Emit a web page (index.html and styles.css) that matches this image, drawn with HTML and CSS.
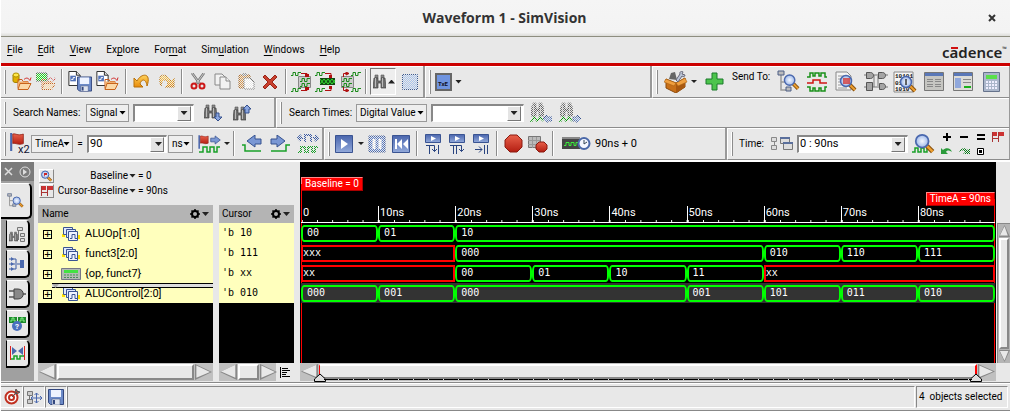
FILE: index.html
```html
<!DOCTYPE html>
<html lang="en">
<head>
<meta charset="utf-8">
<title>Waveform 1 - SimVision</title>
<link rel="stylesheet" href="styles.css">
</head>
<body>
<svg class="defs" width="0" height="0" aria-hidden="true">
  <defs>
    <linearGradient id="gBlue" x1="0" y1="0" x2="0" y2="1"><stop offset="0" stop-color="#4a66ae"/><stop offset="1" stop-color="#92a9da"/></linearGradient>
    <linearGradient id="gGold" x1="0" y1="0" x2="0" y2="1"><stop offset="0" stop-color="#ffd35c"/><stop offset="1" stop-color="#e88a08"/></linearGradient>
    <linearGradient id="gRed" x1="0" y1="0" x2="0" y2="1"><stop offset="0" stop-color="#e8604a"/><stop offset="1" stop-color="#b41e12"/></linearGradient>
    <radialGradient id="gGlass"><stop offset="0" stop-color="#f4f8ff"/><stop offset="1" stop-color="#9fb9ea"/></radialGradient>
  </defs>
  <symbol id="folder" viewBox="0 0 15 13"><path d="M1 11V2h4l1 2h5v2" fill="none" stroke="#c85a20"/><path d="M1 4h10v7H1z" fill="#f0b070"/><path d="M3 6h11l-3 6H1z" fill="#fbd9a8" stroke="#c8641c"/><path d="M7 2c2-2 4-2 6 1l1-3" fill="none" stroke="#d02828"/></symbol>
  <symbol id="page" viewBox="0 0 13 16"><path d="M.5.5h8l4 4v11H.5z" fill="#fff" stroke="#222"/><path d="M8.500 .5v4h4" fill="#ddd" stroke="#222"/><path d="M2 5h6v6H2z" fill="#5272b8"/><path d="M3 9h2V7h2" fill="none" stroke="#fff"/></symbol>
  <symbol id="disk" viewBox="0 0 16 16"><path d="M.5.5h15v15h-13l-2-2z" fill="#6c8ac8" stroke="#33477e"/><path d="M3 1h10v7H3z" fill="#eef3ff"/><path d="M4 10h8v6H4z" fill="#dfe4ee" stroke="#4a5a88" stroke-width=".6"/><path d="M5 11h2v4H5z" fill="#33477e"/></symbol>
  <symbol id="bino" viewBox="0 0 13 15"><path d="M2 1h3v3H2zM8 1h3v3H8z" fill="#888" stroke="#555" stroke-width=".6"/><path d="M1 4h4v3h3V4h4l1 10H8V9H5v5H0z" fill="#6e6e6e" stroke="#444" stroke-width=".7"/><path d="M2.500 4v9M9.500 4v9" stroke="#bbb"/></symbol>
  <symbol id="arrowR" viewBox="0 0 15 13"><path d="M1 4h6V1l7 5.500-7 5.500V9H1z" fill="#7a97d4" stroke="#34508e"/></symbol>
  <symbol id="mag" viewBox="0 0 18 18"><path d="M11 11l5 5" stroke="#8a5210" stroke-width="4"/><path d="M11 11l5 5" stroke="#eda030" stroke-width="2"/><circle cx="7" cy="7" r="5.500" fill="url(#gGlass)" stroke="#4a68ae" stroke-width="1.500"/></symbol>
  <symbol id="sigs" viewBox="0 0 18 14"><path d="M0 7h3v3H0zM14 8h4v4h-4zM1 1h3v3H1z" fill="#ffe000"/><g stroke="#3a5492"><path d="M1.500 .5h9v7h-9z" fill="#dfe8ff"/><path d="M4.500 2.500h9v8h-9z" fill="#dfe8ff"/><path d="M6.500 4.500h9v9h-9z" fill="#eef3ff"/><path d="M8 11.500h2v-4h3v4h2" fill="none"/></g></symbol>
  <symbol id="wav" viewBox="0 0 10 4"><path d="M0 3.500h2v-3h2.500v3H7v-3h3" fill="none" stroke="#1a8a1a"/></symbol>
  <symbol id="tree" viewBox="0 0 22 22"><path d="M4 5v15h6M4 12h5" fill="none" stroke="#999" stroke-width="1.500"/><path d="M1 1h6v4H1zM9 17h5v4H9z" fill="#bbb" stroke="#4c5f86"/></symbol>
  <symbol id="flag" viewBox="0 0 14 17"><path d="M1.500 0v17" stroke="#4a68ae" stroke-width="2"/><path d="M3 1c3-1 4 2 10 0v9c-5 2-7-1-10 0z" fill="url(#gRed)" stroke="#8a1a10" stroke-width=".7"/></symbol>
  <symbol id="flags" viewBox="0 0 12 10"><path d="M.5 0v10M6.500 0v10M0 6.500h7" stroke="#a33" fill="none"/><path d="M1 0h4v4H1zM7 0h5v4H7z" fill="#c33"/></symbol>
  <symbol id="calc" viewBox="0 0 20 12"><path d="M.5.5h19v11H.5z" fill="#b4bcb4" stroke="#778"/><path d="M3 2h14v3H3z" fill="#42e242"/><path d="M3 7h14M3 9.500h14" stroke="#4a8a5a" stroke-dasharray="2 1"/></symbol>
</svg>

<header class="titlebar"><h1>Waveform 1 - SimVision</h1><button class="close" aria-label="Close"><svg width="8" height="8"><path d="M1 1l6 6M7 1l-6 6" stroke="#333" stroke-width="2"/></svg></button></header>

<nav class="menubar">
  <button><u>F</u>ile</button><button><u>E</u>dit</button><button><u>V</u>iew</button><button>Ex<u>p</u>lore</button><button>For<u>m</u>at</button><button>Sim<u>u</u>lation</button><button><u>W</u>indows</button><button><u>H</u>elp</button>
  <span class="logo">c<span class="bar">a</span>dence<small>™</small></span>
</nav>

<div class="row tall">
  <div class="group file-tools">
    <i class="grip"></i>
    <button class="tool" aria-label="Open database"><svg width="20" height="20"><path d="M1 3v6c0 2 6 2 6 0V3" fill="#e0b000" stroke="#a08000"/><ellipse cx="4" cy="3" rx="3" ry="2" fill="#ffe84a" stroke="#b09000"/><use href="#folder" x="5" y="5" width="15" height="14"/></svg></button>
    <button class="tool off" aria-label="Close database"><svg width="20" height="20"><path d="M0 1h11v8H0z" fill="#1ee01e" stroke="#555"/><use href="#folder" x="5" y="5" width="15" height="14"/></svg></button>
    <i class="sep"></i>
    <button class="tool wide" aria-label="Save layout"><svg width="24" height="21"><use href="#page" width="13" height="15"/><use href="#disk" x="9" y="5" width="15" height="16"/></svg></button>
    <button class="tool wide" aria-label="Load layout"><svg width="24" height="21"><use href="#page" width="13" height="15"/><use href="#folder" x="8" y="6" width="15" height="14"/></svg></button>
    <i class="sep"></i>
    <button class="tool" aria-label="Undo"><svg width="18" height="16"><path d="M1 4v9h9L7 10c1-5 6-6 7 2 5-14-6-13-10-5z" fill="url(#gGold)" stroke="#b87008"/></svg></button>
    <button class="tool off" aria-label="Redo"><svg width="18" height="16"><path d="M17 4v9H8l3-3C10 5 5 4 4 12-1-2 10-1 14 7z" fill="url(#gGold)" stroke="#b87008"/></svg></button>
    <i class="sep"></i>
    <button class="tool" aria-label="Cut"><svg width="16" height="18"><path d="M2 0l8 11M14 0L6 11" stroke="#777" stroke-width="2.500"/><path d="M2 0l8 11M14 0L6 11" stroke="#ccc"/><g fill="none" stroke="#cc1818" stroke-width="2"><circle cx="4" cy="13" r="2.500"/><circle cx="12" cy="13" r="2.500"/></g></svg></button>
    <button class="tool" aria-label="Copy"><svg width="17" height="17"><g fill="#f2f2f2" stroke="#888"><path d="M1 1h7l3 3v8H1z"/><path d="M6 4h6l4 4v8H6z"/><path d="M12 4v4h4"/></g></svg></button>
    <button class="tool off" aria-label="Paste"><svg width="17" height="17"><path d="M1 2h11v13H1z" fill="#d89850" stroke="#a06020"/><path d="M4 0h5v3H4z" fill="#999"/><path d="M6 5h6l4 4v7H6z" fill="#fff" stroke="#777"/></svg></button>
    <button class="tool" aria-label="Delete"><svg width="16" height="16"><path d="M1 3l2-2 5 5 5-5 2 2-5 5 5 5-2 2-5-5-5 5-2-2 5-5z" fill="#c8402e" stroke="#9a2418"/></svg></button>
    <i class="sep"></i>
    <button class="tool" aria-label="Insert signals"><svg width="22" height="20"><use href="#wav" width="10" height="4"/><use href="#wav" y="16" width="10" height="4"/><path d="M7.500 4.500h12v11h-12z" fill="#ccc" stroke="#888"/><path d="M10 1.500h6v3M10 18.500h6v-3" fill="none" stroke="#b01010"/><path d="M14 2h4v3h-4zM14 15h4v3h-4z" fill="#b01010"/><use href="#wav" x="9" y="6" width="10" height="4"/><use href="#wav" x="9" y="11" width="10" height="4"/></svg></button>
    <button class="tool" aria-label="Overlay signals"><svg width="22" height="20"><use href="#wav" width="10" height="4"/><use href="#wav" y="16" width="10" height="4"/><path d="M10 1.500h6v3M10 18.500h6v-3" fill="none" stroke="#b01010"/><path d="M14 3h3v3h-3zM14 14h3v3h-3z" fill="#b01010"/><path d="M5 6h15v7H5z" fill="#144a14"/><path d="M5 7l4 5 4-5 4 5 3-4M5 12l4-5 4 5 4-5 3 4" fill="none" stroke="#32e032"/></svg></button>
    <button class="tool" aria-label="Extract signals"><svg width="22" height="20"><use href="#wav" x="12" width="10" height="4"/><use href="#wav" x="12" y="16" width="10" height="4"/><path d="M2.500 4.500h12v11h-12z" fill="#ccc" stroke="#888"/><path d="M4.500 5V1.500H10M4.500 15v3.500H10" fill="none" stroke="#b01010"/><path d="M7 0l3 1.500L7 3zM7 17l3 1.500L7 20z" fill="#b01010" stroke="#b01010"/><use href="#wav" x="3" y="6" width="10" height="4"/><use href="#wav" x="3" y="11" width="10" height="4"/></svg></button>
    <i class="sep"></i>
    <button class="toggle" aria-label="Search bar"><svg width="13" height="15"><use href="#bino" width="13" height="15"/></svg><i class="up"></i></button>
    <button class="tool off" aria-label="Select region"><svg width="16" height="16"><path d="M.5.500h15v15H.5z" fill="#a9c4ec" stroke="#3a5a92"/></svg></button>
  </div>
  <div class="group txe-tools">
    <i class="grip"></i>
    <button class="txe" aria-label="Transaction explorer"><svg width="17" height="18"><path d="M1 1h15v16H1z" fill="#6f94e0" stroke="#666" stroke-width="2"/><text x="3" y="13" class="tiny">TxE</text></svg></button><i class="down"></i>
  </div>
  <div class="group grow send-tools">
    <i class="grip"></i>
    <button class="tool wide" aria-label="Toolbox"><svg width="24" height="22"><path d="M2 8l10 4 9-5v9l-9 6-10-5z" fill="#c87018" stroke="#8a4a0c"/><path d="M12 12v10l9-6V7z" fill="#a85810"/><path d="M2 8L0 11l10 4 2-3zM21 7l2 4-9 4-2-3z" fill="#f0a040" stroke="#a86010" stroke-width=".6"/><path d="M5 8l2-6 4-1 2 8z" fill="#666"/><path d="M12 9l4-6c-1-3 3-3 3-2l-1 2 3 1c0 2-2 2-3 1l-4 6z" fill="#bcc6d8" stroke="#667"/></svg></button><i class="down small"></i>
    <button class="tool" aria-label="Add"><svg width="19" height="19"><path d="M7 1h5v6h6v5h-6v6H7v-6H1V7h6z" fill="#4cc44c" stroke="#1a7a2a"/></svg></button>
    <span class="send">Send To:</span>
    <button class="tool xl" aria-label="Design browser"><svg width="24" height="23"><use href="#tree" width="22" height="22"/><use href="#mag" x="6" y="3" width="17" height="18"/></svg></button>
    <button class="tool xl" aria-label="Waveform"><svg width="21" height="20"><path d="M0 5h3V1h3v3h2V1h4v3h2V1h4v4h2M0 15h3v4h3v-3h2v3h4v-3h2v3h4v-4h2" fill="none" stroke="#189018" stroke-width="1.500"/><path d="M0 11h6V8h7v3h7" fill="none" stroke="#d01414" stroke-width="1.500"/></svg></button>
    <button class="tool xl" aria-label="Source browser"><svg width="23" height="22"><path d="M1 1h11l4 4v14H1z" fill="#f4f4f4" stroke="#888"/><path d="M3 5h8M3 8h3M3 11h3M3 14h3M3 17h9" stroke="#999"/><use href="#mag" x="4" y="3" width="18" height="18"/><path d="M8 8h7M8 10h7M8 12h7" stroke="#d03030" stroke-width="1.500"/></svg></button>
    <button class="tool xl" aria-label="Schematic"><svg width="24" height="21"><path d="M0 4h24M0 16h24M10 4v12M14 5v10" stroke="#777"/><g fill="#a4a4a4" stroke="#555"><path d="M2.500 1.500h4c4 0 4 6 0 6h-4zM14.500 1.500h4c4 0 4 6 0 6h-4zM2.500 11.500h6v8h-6zM15.500 12.500h3c4 0 4 6 0 6h-3z"/></g></svg></button>
    <button class="tool xl" aria-label="Memory viewer"><svg width="24" height="22"><path d="M1 1h19v20H1z" fill="#f6f6f6" stroke="#888"/><text x="2" y="7" class="bits">10101</text><text x="2" y="14" class="bits">01</text><text x="2" y="20" class="bits">1010</text><use href="#mag" x="6" y="4" width="18" height="18"/><path d="M13 8v6" stroke="#333" stroke-width="1.500"/></svg></button>
    <button class="tool xl" aria-label="List"><svg width="20" height="19"><path d="M.5.500h19v18H.5z" fill="#c6c6c2" stroke="#777"/><path d="M1 1h18v3H1z" fill="#5a78b8"/><path d="M3 7.500h6M3 9.500h6M3 12.500h6M3 14.500h6M11 7.500h6M11 9.500h6M11 12.500h6M11 14.500h6" stroke="#888"/></svg></button>
    <button class="tool xl" aria-label="Properties"><svg width="20" height="19"><path d="M.5.500h19v18H.5z" fill="#dcdcd8" stroke="#777"/><path d="M1 1h18v3H1z" fill="#5a78b8"/><path d="M2 6h6v10H2z" fill="#90a8dc"/><path d="M10 7.500h8M10 10.500h8" stroke="#888"/><path d="M11 15h7" stroke="#1ab01a" stroke-width="2"/></svg></button>
    <button class="tool xl" aria-label="Calculator"><svg width="17" height="20"><path d="M.5.500h16v19H.5z" fill="#aab6ca" stroke="#66738c"/><path d="M3 3h11v4H3z" fill="#5ae04a"/><path d="M3 10h11M3 13h11M3 16h11" stroke="#eef" stroke-width="2" stroke-dasharray="2 1"/></svg></button>
  </div>
</div>

<div class="row">
  <div class="group search-names">
    <i class="grip"></i>
    <label for="names">Search Names:</label>
    <span class="pick"><select class="w-signal" aria-label="Name kind"><option>Signal</option></select></span>
    <span class="combo w-names"><input id="names" type="text"><button aria-label="Name history"><i class="down"></i></button></span>
    <button class="tool bin" aria-label="Search down"><svg width="19" height="18"><use href="#bino" width="13" height="15"/><path d="M12 9h3v4h3l-4 4-4-4h2z" fill="#8aa6e0" stroke="#34508e"/></svg></button>
    <button class="tool bin" aria-label="Search up"><svg width="19" height="18"><use href="#bino" y="2" width="13" height="15"/><path d="M12 9V5h-2l4-4 4 4h-2v4z" fill="#8aa6e0" stroke="#34508e"/></svg></button>
  </div>
  <div class="group grow search-times">
    <i class="grip"></i>
    <label for="times">Search Times:</label>
    <span class="pick"><select class="w-value" aria-label="Time kind"><option>Digital Value</option></select></span>
    <span class="combo w-times"><input id="times" type="text"><button aria-label="Time history"><i class="down"></i></button></span>
    <button class="tool bin off" aria-label="Previous match"><svg width="22" height="21"><use href="#bino" x="1" width="13" height="15"/><path d="M0 19h2l2-4 3 4 3-4 3 4" fill="none" stroke="#090" stroke-width="1.500"/><path d="M13 17l4-4v2h5v4h-5v2z" fill="#7a97d4" stroke="#34508e"/></svg></button>
    <button class="tool bin off" aria-label="Next match"><svg width="22" height="21"><use href="#bino" x="1" width="13" height="15"/><path d="M0 19h2l2-4 3 4 3-4 3 4" fill="none" stroke="#090" stroke-width="1.500"/><path d="M22 17l-4-4v2h-4v4h4v2z" fill="#7a97d4" stroke="#34508e"/></svg></button>
  </div>
</div>

<div class="row tall">
  <div class="group cursor-tools">
    <i class="grip"></i>
    <svg width="24" height="22" role="img" aria-label="Cursor"><use href="#flag" x="2" width="16" height="18"/><text x="11" y="20" class="x2">x2</text></svg>
    <span class="pick"><select class="w-cursor" aria-label="Cursor name"><option>TimeA</option></select></span>
    <label for="at">=</label>
    <span class="combo w-at"><input id="at" type="text" value="90"><button aria-label="Cursor history"><i class="down"></i></button></span>
    <span class="pick"><select class="w-unit" aria-label="Unit"><option>ns</option></select></span>
    <button class="tool" aria-label="Go to marker"><svg width="23" height="20"><use href="#flag" y="1" width="11" height="14"/><use href="#arrowR" x="12" y="1" width="11" height="10"/><path d="M1 18h4v-5h4v5h3v-5h4v5h3v-5h3" fill="none" stroke="#18a028" stroke-width="1.500"/></svg></button><i class="down small"></i>
    <i class="sep"></i>
    <button class="tool edge" aria-label="Previous edge"><svg width="21" height="18"><path d="M0 10h3v6h16" fill="none" stroke="#18a028" stroke-width="1.500"/><path d="M19 4h-6V0L5 6l8 6V9h6z" fill="#7a97d4" stroke="#34508e"/></svg></button>
    <button class="tool edge" aria-label="Next edge"><svg width="21" height="18"><path d="M1 16h15v-6h4" fill="none" stroke="#18a028" stroke-width="1.500"/><path d="M1 4h6V0l8 6-8 6V9H1z" fill="#7a97d4" stroke="#34508e"/></svg></button>
    <button class="tool edge off" aria-label="Nearest edge"><svg width="22" height="19"><path d="M4 1L1 4l3 3M18 1l3 3-3 3M1 4h5M16 4h5M8 8V1h6v7" fill="none" stroke="#3a5aa2" stroke-width="2"/><path d="M1 18h3v-5h4v5h3v-5h4v5h3v-5h3" fill="none" stroke="#18a028" stroke-width="2"/></svg></button>
  </div>
  <div class="group run-tools">
    <i class="grip"></i>
    <button class="tool" aria-label="Run"><svg width="18" height="18"><path d="M.5.500h17v17H.5z" fill="url(#gBlue)" stroke="#3a5492"/><path d="M6 4v10l7-5z" fill="#fff"/></svg></button><i class="down small"></i>
    <button class="tool off" aria-label="Pause"><svg width="18" height="18"><path d="M1 1h16v16H1z" fill="#5a7cc4" stroke="#3a5492"/><path d="M6 4v10M12 4v10" stroke="#fff" stroke-width="3"/></svg></button>
    <button class="tool" aria-label="Restart"><svg width="18" height="18"><path d="M.5.500h17v17H.5z" fill="url(#gBlue)" stroke="#3a5492"/><path d="M3 4h2v10H3zM10 4v10L5 9zM16 4v10l-5-5z" fill="#fff"/></svg></button>
    <i class="sep"></i>
    <button class="tool" aria-label="Step"><svg width="16" height="20"><path d="M.5.500h15v8H.5z" fill="url(#gBlue)" stroke="#3a5492"/><path d="M6 2v5l5-2.500z" fill="#fff"/><path d="M1 11.500h8.500v6M4.500 11v9M13.500 11v9M7 15l2.500 2.500L12 15" fill="none" stroke="#2a4480"/></svg></button>
    <button class="tool" aria-label="Step over"><svg width="16" height="20"><path d="M.5.500h15v8H.5z" fill="url(#gBlue)" stroke="#3a5492"/><path d="M6 2v5l5-2.500z" fill="#fff"/><path d="M1 11.500h11.500v6M4.500 11v9M7.500 11v9M10 15l2.500 2.500L15 15" fill="none" stroke="#2a4480"/></svg></button>
    <button class="tool" aria-label="Step out"><svg width="16" height="20"><path d="M.5.500h15v8H.5z" fill="url(#gBlue)" stroke="#3a5492"/><path d="M6 2v5l5-2.500z" fill="#fff"/><path d="M2 15.500h7M6 12.500l3 3-3 3M11.500 11v9M14.500 11v9" fill="none" stroke="#2a4480"/></svg></button>
    <i class="sep"></i>
    <button class="tool" aria-label="Stop"><svg width="19" height="19"><path d="M6 1h7l5 5v7l-5 5H6l-5-5V6z" fill="url(#gRed)" stroke="#8a1a10"/></svg></button>
    <button class="tool" aria-label="Breakpoints"><svg width="21" height="18"><path d="M1.500 1.500h12v11h-12z" fill="#bbb" stroke="#777"/><path d="M5.500 2v11M9.500 2v11M1 5.500h12M1 9.500h12" stroke="#999"/><path d="M12 7h5l3 3v4l-3 3h-5l-3-3v-4z" fill="url(#gRed)" stroke="#8a1a10"/></svg></button>
    <i class="sep"></i>
    <svg class="clock" width="29" height="16" role="img" aria-label="Simulation time"><path d="M0 2h18v11H0z" fill="#444"/><path d="M0 1h18v2H0z" fill="#888"/><path d="M2 9.500h2v-3h3v3h2v-3h3v3h2v-3h3" fill="none" stroke="#3af03a"/><circle cx="22" cy="7.500" r="5.500" fill="#f4f7ff" stroke="#4a68a8" stroke-width="2"/><path d="M22 4v4l3-2" fill="none" stroke="#345"/></svg>
    <output>90ns + 0</output>
  </div>
  <div class="group grow time-tools">
    <i class="grip"></i>
    <label for="range">Time:</label>
    <svg class="link" width="23" height="15" aria-hidden="true"><path d="M1.500 1.500h5v4h-5zM1.500 9.500h5v4h-5zM4.500 5v5" fill="#ddd" stroke="#888"/><path d="M10.500 1.500h9v6h-9zM13.500 6.500h9v7h-9z" fill="#ddd" stroke="#777"/><path d="M10 1h10v2H10zM13 6h10v2H13z" fill="#5a6f9c"/></svg>
    <span class="combo w-range"><input id="range" type="text" value="0 : 90ns"><button aria-label="Range history"><i class="down"></i></button></span>
    <button class="tool zoom" aria-label="Zoom to fit"><svg width="23" height="21"><path d="M0 19h3v-4h3v4h3v-4h3v4h3v-4" fill="none" stroke="#18a028" stroke-width="1.500"/><use href="#mag" x="2" width="21" height="21"/></svg></button>
    <div class="mini">
      <button aria-label="Zoom in"><svg width="8" height="8"><path d="M4 0v8M0 4h8" stroke="#000" stroke-width="2"/></svg></button>
      <button aria-label="Zoom out"><svg width="8" height="8"><path d="M0 4h8" stroke="#000" stroke-width="2"/></svg></button>
      <button aria-label="Zoom full"><svg width="8" height="8"><path d="M0 2h8M0 6h8" stroke="#000" stroke-width="2"/></svg></button>
      <button aria-label="Zoom cursors"><svg width="12" height="10"><use href="#flags" width="12" height="10"/></svg></button>
      <button aria-label="Undo zoom"><svg width="12" height="8"><path d="M0 7V1l2 2c3-3 8-2 9 2-3-2-5-2-6 0l2 2z" fill="#2a9a3a"/></svg></button>
      <button class="off" aria-label="Redo zoom"><svg width="12" height="8"><path d="M12 7V1l-2 2C7 0 2 1 1 5c3-2 5-2 6 0L5 7z" fill="#087a18"/></svg></button>
      <button aria-label="Zoom box"><svg width="7" height="7"><path d="M.5.500h6v6h-6z" fill="#fff" stroke="#000"/><path d="M2 2h3v3H2z"/></svg></button>
    </div>
  </div>
</div>

<main class="work">
  <aside class="tabs">
    <div class="tabs-head"><button aria-label="Close panel"><svg width="9" height="9"><path d="M1 1l7 7M8 1L1 8" stroke="#ddd" stroke-width="1.500"/></svg></button><button aria-label="Expand panel"><svg width="12" height="12"><circle cx="6" cy="6" r="5" fill="none" stroke="#ddd"/><path d="M4 3v6l4-3z" fill="#ddd"/></svg></button></div>
    <button class="tab active" aria-label="Design browser"><svg width="17" height="17"><use href="#tree" width="14" height="16"/><use href="#mag" x="5" y="4" width="12" height="12"/></svg></button>
    <button class="tab" aria-label="Design search"><svg width="17" height="16"><use href="#bino" y="5" width="9" height="11"/><path d="M8.500 1.500h5v3h-5zM11.500 7.500h4v3h-4zM11.500 12.500h4v3h-4zM9.500 5v9" fill="#ddd" stroke="#777"/></svg></button>
    <button class="tab" aria-label="Signal flow"><svg width="17" height="14"><path d="M0 2h7v4M0 7h11M0 12h7V8" fill="none" stroke="#3a5aa2"/><path d="M2 0l3 2-3 2zM2 5l3 2-3 2zM2 10l3 2-3 2zM11 3h4v8h-4z" fill="#4a68ae"/></svg></button>
    <button class="tab" aria-label="Gates"><svg width="17" height="12"><path d="M0 3h5M0 9h5M12 6h5" stroke="#555" stroke-width="1.500"/><path d="M5 1h4c7 0 7 10 0 10H5z" fill="#888" stroke="#444"/></svg></button>
    <button class="tab" aria-label="Waveform help"><svg width="18" height="16"><path d="M0 1h8v6H0zM9 1h8v6H9z" fill="#1b8a2a"/><path d="M1 5h2V2h2v3h2M10 5h2V2h2v3h2" fill="none" stroke="#8e8"/><circle cx="8" cy="10" r="5" fill="#4a70be"/><text x="6" y="13" class="ask">?</text></svg></button>
    <button class="tab" aria-label="Measure"><svg width="15" height="15"><path d="M.5 0v14M14.500 0v14" stroke="#d22"/><path d="M2 1l5 4-5 4zM13 1L8 5l5 4z" fill="#4a68ae"/><path d="M1 13h3v-3h3v3h3v-3h4" fill="none" stroke="#18a028" stroke-width="1.500"/></svg></button>
  </aside>

  <div class="left">
    <div class="readouts">
      <div><button aria-label="Find baseline"><svg width="13" height="12"><use href="#mag" width="13" height="12"/><path d="M4 7V3h3v2H5" fill="#c22"/></svg></button><span class="key">Baseline<i class="down"></i></span>= 0</div>
      <div><button aria-label="Swap cursor and baseline"><svg width="12" height="10"><use href="#flags" width="12" height="10"/></svg></button><span class="key">Cursor-Baseline<i class="down"></i></span>= 90ns</div>
    </div>
    <div class="columns">
      <section class="names">
        <h2>Name<button aria-label="Name options"><svg width="10" height="10"><circle cx="5" cy="5" r="3" fill="none" stroke="#000" stroke-width="2"/><path d="M5 0v2M5 8v2M0 5h2M8 5h2M1.500 1.500l1 1M7.500 7.500l1 1M8.500 1.500l-1 1M2.500 7.500l-1 1" stroke="#000" stroke-width="1.500"/></svg><i class="down"></i></button></h2>
        <ul>
          <li><button aria-label="Expand">+</button><svg width="20" height="14"><use href="#sigs" width="20" height="14"/></svg>ALUOp[1:0]</li>
          <li><button aria-label="Expand">+</button><svg width="20" height="14"><use href="#sigs" width="20" height="14"/></svg>funct3[2:0]</li>
          <li><button aria-label="Expand">+</button><svg width="20" height="12"><use href="#calc" width="20" height="12"/></svg>{op, funct7}</li>
          <li class="drop"><button aria-label="Expand">+</button><svg width="20" height="14"><use href="#sigs" width="20" height="14"/></svg>ALUControl[2:0]</li>
        </ul>
        <div class="hscroll"><i class="arr l"></i><i class="thumb"></i><i class="arr r"></i></div>
      </section>
      <section class="values">
        <h2>Cursor<button aria-label="Cursor options"><svg width="10" height="10"><circle cx="5" cy="5" r="3" fill="none" stroke="#000" stroke-width="2"/><path d="M5 0v2M5 8v2M0 5h2M8 5h2M1.500 1.500l1 1M7.500 7.500l1 1M8.500 1.500l-1 1M2.500 7.500l-1 1" stroke="#000" stroke-width="1.500"/></svg><i class="down"></i></button></h2>
        <ul><li>'b 10</li><li>'b 111</li><li>'b xx</li><li>'b 010</li></ul>
        <div class="hscroll"><i class="arr l"></i><i class="thumb"></i><i class="arr r"></i><button aria-label="Align left"><svg width="11" height="11"><path d="M.5 0v11M2 1.500h6M2 3.500h8M2 5.500h5M2 7.500h4M2 9.500h8" stroke="#000"/></svg></button></div>
      </section>
    </div>
  </div>

  <section class="waves">
    <div class="plot">
      <span class="mark base">Baseline = 0</span>
      <span class="mark cur">TimeA = 90ns</span>
      <i class="vline"></i><i class="vline end"></i>
      <div class="ruler"><span>0</span><span>10ns</span><span>20ns</span><span>30ns</span><span>40ns</span><span>50ns</span><span>60ns</span><span>70ns</span><span>80ns</span></div>
      <div class="trace"><b>00</b><b>01</b><b class="t7">10</b></div>
      <div class="trace"><b class="t2 x">xxx</b><b class="t4">000</b><b>010</b><b>110</b><b>111</b></div>
      <div class="trace"><b class="t2 x">xx</b><b>00</b><b>01</b><b>10</b><b>11</b><b class="t3 x">xx</b></div>
      <div class="trace lit"><b>000</b><b>001</b><b class="t3">000</b><b>001</b><b>101</b><b>011</b><b>010</b></div>
    </div>
    <div class="hscroll long"><i class="arr l"></i><i class="thumb"></i><i class="arr r"></i>
      <svg class="peg" width="12" height="9"><path d="M.5 8.500V6L6 1l5.500 5v2.500z" fill="#ddd" stroke="#000"/></svg>
      <svg class="peg last" width="12" height="9"><path d="M.5 8.500V6L6 1l5.500 5v2.500z" fill="#ddd" stroke="#000"/></svg>
    </div>
  </section>
  <div class="vscroll"><i class="arr u"></i><i class="thumb"></i><i class="arr d"></i></div>
</main>

<footer class="status">
  <button aria-label="Target"><svg width="16" height="16"><circle cx="7.500" cy="8.500" r="6" fill="#fff" stroke="#c03020" stroke-width="2"/><circle cx="7.500" cy="8.500" r="2.500" fill="#fff" stroke="#c03020" stroke-width="2"/><path d="M8 8l6-6M11 3l1-3 1 2 3 1-3 2z" stroke="#555" fill="#d04030"/></svg></button>
  <button aria-label="Link windows"><svg width="16" height="15"><path d="M1.500 1.500h5v4h-5zM1.500 9.500h5v4h-5zM3.500 5v5" fill="#ccc" stroke="#777"/><path d="M5 8h11M10.500 3v10M7 6l-2 2 2 2M14 6l2 2-2 2M8.500 5l2-2 2 2M8.500 11l2 2 2-2" fill="none" stroke="#4a68ae"/></svg></button>
  <button aria-label="Save"><svg width="16" height="16"><use href="#disk" width="16" height="16"/></svg></button>
  <span class="msg"></span>
  <span class="count">4 &nbsp;objects selected</span>
</footer>
</body>
</html>
```

FILE: styles.css
```css
* { box-sizing: border-box; }
body {
  margin: 0; min-height: 100vh; display: flex; flex-direction: column;
  background: #e8e8e8; color: #000; border-left: 1px solid #fff;
  font: 10px/14px Roboto, "Liberation Sans", sans-serif;
}
button { font: inherit; color: inherit; background: none; border: 0; padding: 0; margin: 0; }
svg { display: block; flex: none; }
.defs { position: absolute; }
i { display: block; flex: none; }

.titlebar {
  display: flex; align-items: center; min-height: 37px; padding: 0 14px 0 20px;
  background: linear-gradient(#f5f5f5, #f3f3f3 90%, #dcdcd8); border-bottom: 1px solid #8e8e80;
}
.titlebar h1 { flex: 1; margin: 0; text-align: center; font: 700 14px/20px "Open Sans", sans-serif; color: #333; }

.menubar {
  display: flex; align-items: center; gap: 15px; min-height: 29px; padding: 0 3px 0 6px;
  border-bottom: 3px solid #c00;
}
.menubar u { text-underline-offset: 2px; }
.logo { margin-left: auto; font: 600 15px/20px "Noto Sans", sans-serif; color: #222; }
.logo .bar { position: relative; }
.logo .bar::before { content: ""; position: absolute; left: 1px; right: 0; top: 5px; height: 2px; background: #d01010; }
.logo small { font-size: 6px; vertical-align: 7px; }

.row { display: flex; min-height: 30px; }
.row.tall { min-height: 32px; }
.group {
  display: flex; align-items: center; flex: none; padding: 0 3px;
  border: 1px solid #8c8c8c; border-width: 0 2px 1px 0; border-right-color: #999;
  box-shadow: inset 0 1px #fff;
}
.group + .group { border-left: 1px solid #fff; }
.group.grow { flex: 1; min-width: 0; border-right-width: 1px; }
.grip { align-self: stretch; width: 2px; margin: 4px 4px 3px 0; background: #8c8c8c; border-left: 1px solid #fff; }
.sep { align-self: stretch; width: 2px; margin: 3px; background: #fff; border-left: 1px solid #8c8c8c; }
.tool { display: flex; flex: none; width: 24px; justify-content: center; }
.tool.wide { width: 28px; }
.tool.xl, .tool.bin { width: 29px; }
.tool.edge { width: 28px; }
.off svg { -webkit-mask: repeating-conic-gradient(#000 0 25%, transparent 0 50%) 0 0 / 2px 2px; mask: repeating-conic-gradient(#000 0 25%, transparent 0 50%) 0 0 / 2px 2px; }
.down, .up { width: 7px; height: 4px; background: #222; clip-path: polygon(0 0, 100% 0, 50% 100%); }
.up { clip-path: polygon(50% 0, 100% 100%, 0 100%); }
.down.small { width: 6px; height: 3px; }
.file-tools { width: 424px; }
.toggle { display: flex; align-items: center; flex: none; gap: 2px; width: 26px; height: 27px; padding: 0 2px; margin-right: 2px; border: 1px solid; border-color: #777 #fff #fff #777; background: #eee; }
.tiny { font: 700 6px Roboto, sans-serif; fill: #112; }
.bits { font: 700 6px "Liberation Mono", monospace; fill: #111; }
.x2 { font: 11px Roboto, sans-serif; fill: #113; }
.ask { font: 700 8px Roboto, sans-serif; fill: #fff; }

.txe-tools { width: 227px; }
.txe-tools .down { margin-left: 3px; }
.send-tools .down { margin: 0 5px 0 1px; }
.send { align-self: flex-start; margin: 4px 2px 0 6px; width: 41px; white-space: nowrap; }

.search-names { width: 275px; }
label, output { white-space: nowrap; flex: none; }
.search-names label, .search-times label { margin-left: 3px; width: 73px; }
.search-times label { width: 67px; }
.pick { position: relative; flex: none; }
.pick::after {
  content: ""; position: absolute; right: 3px; top: 7px; width: 7px; height: 4px;
  background: #000; clip-path: polygon(0 0, 100% 0, 50% 100%); pointer-events: none;
}
select {
  display: block; appearance: none; height: 18px; padding: 0 3px; border: 1px solid #999; border-radius: 0;
  background: #eee; color: #000; font: inherit; outline: 0;
}
.w-signal { width: 43px; } .w-value { width: 71px; } .w-cursor { width: 42px; } .w-unit { width: 25px; }
.combo {
  display: flex; align-items: stretch; flex: none; height: 18px; background: #fff; padding-right: 2px;
  border: 2px solid; border-color: #888 #fff #fff #888; border-right-width: 1px; border-bottom-width: 1px;
}
.combo input { flex: 1; width: 0; min-width: 0; border: 0; padding: 0 1px; background: none; font: inherit; font-size: 11px; color: #000; outline: 0; }
.combo button { display: flex; align-items: center; justify-content: center; width: 14px; background: #e4e4e4; border: 1px solid; border-color: #fff #777 #777 #fff; }
.w-names { width: 61px; margin: 0 5px 0 4px; }
.w-times { width: 93px; margin: 0 2px 0 4px; }
.w-at { width: 80px; margin-right: 1px; }
.w-range { flex: 1; min-width: 60px; }
output { font-size: 11px; }

.cursor-tools .grip, .time-tools .grip { margin-right: 1px; }
.cursor-tools label { width: 14px; text-align: center; }
.cursor-tools .tool:first-of-type { margin-left: 4px; }
.cursor-tools .down { margin-left: 3px; }
.cursor-tools { width: 323px; }
.run-tools { width: 403px; }
.run-tools .grip { margin-right: 2px; }
.run-tools .down { margin: 0 1px 0 2px; }
.clock { margin: 0 4px 0 5px; }
.time-tools label { margin-left: 5px; width: 31px; }
.link { margin-right: 4px; }
.tool.zoom { width: 30px; }
.mini { display: grid; grid-template-columns: repeat(4, 17px); grid-template-rows: 15px 14px; }
.mini button { display: flex; align-items: center; justify-content: center; }

.work { flex: 1; display: flex; min-height: 0; border-top: 2px solid #fff; border-bottom: 1px solid #e8e8e8; }
.tabs { display: flex; flex-direction: column; width: 33px; margin-right: 4px; background: #a0a0a0; }
.tabs-head { display: flex; align-items: center; justify-content: center; gap: 6px; height: 19px; background: #7b7b7b; }
.tab {
  display: flex; align-items: center; justify-content: center; width: 24px; height: 28px; margin: 0 0 2px 5px;
  background: #e8e8e8; border: 1px solid #000; border-width: 1px 2px 2px 1px; border-top-color: #fff; border-radius: 0 5px 5px 0;
}
.tab.active { width: 31px; height: 36px; margin: 2px 0 1px 0; border-left: 0; }

.left { display: flex; flex-direction: column; flex: none; width: 262px; }
.readouts { padding: 6px 0 7px 1px; height: 43px; }
.readouts > div { display: flex; align-items: center; height: 15px; gap: 2px; }
.readouts button { display: flex; align-items: center; justify-content: center; width: 15px; height: 14px; border: 1px solid; border-color: #fff #888 #888 #fff; }
.key { display: flex; justify-content: flex-end; align-items: center; gap: 1px; width: 80px; white-space: nowrap; }
.columns { display: flex; flex: 1; gap: 6px; padding-right: 6px; }
.columns section { display: flex; flex-direction: column; background: #000; }
.names { flex: 1; position: relative; }
.values { width: 75px; }
h2 { display: flex; align-items: center; height: 18px; margin: 0; padding: 0 4px; background: #b4b4b4; font: inherit; }
.values h2 { padding-left: 3px; }
h2 button { display: flex; align-items: center; gap: 2px; margin-left: auto; }
ul { margin: 0; padding: 0; list-style: none; background: #ffffbd; }
li { position: relative; display: flex; align-items: center; height: 20px; padding: 2px 0 0 5px; font-size: 11px; }
.names li svg { margin: 0 4px 0 9px; }
.names li button { width: 9px; height: 9px; border: 1px solid #000; font: 11px/7px "DejaVu Sans Mono", monospace; display: flex; align-items: center; justify-content: center; }
.values li { padding: 0 0 0 3px; font: 10px/14px "DejaVu Sans Mono", monospace; }
.drop::before { content: ""; position: absolute; left: 14px; right: 0; top: 0; height: 3px; border: 1px solid #000; border-width: 1px 0; background: #ddd; }
.drop::after { content: ""; position: absolute; left: 14px; top: 1px; width: 7px; height: 4px; background: #aaa; clip-path: polygon(0 0, 100% 0, 50% 100%); }

.hscroll { position: relative; display: flex; align-items: stretch; height: 18px; margin-top: auto; padding: 1px; background: #c0c0c0; }
.arr { width: 17px; background: #888; }
.arr::before { content: ""; display: block; width: 100%; height: 100%; background: #e8e8e8; }
.arr.l { clip-path: polygon(0 50%, 100% 0, 100% 100%); }
.arr.r { clip-path: polygon(0 0, 100% 50%, 0 100%); }
.arr.u { clip-path: polygon(50% 0, 100% 100%, 0 100%); }
.arr.d { clip-path: polygon(0 0, 100% 0, 50% 100%); }
.arr.l::before, .arr.r::before { clip-path: polygon(0 0, 90% 0, 90% 86%, 0 44%); }
.arr.r::before { clip-path: polygon(8% 10%, 88% 50%, 8% 86%); }
.arr.u::before, .arr.d::before { clip-path: polygon(50% 10%, 80% 88%, 8% 88%); }
.arr.d::before { clip-path: polygon(8% 8%, 85% 8%, 50% 88%); }
.thumb { flex: 1; margin: 0 1px; background: #e8e8e8; border: 2px solid; border-color: #fff #888 #888 #fff; }
.values .hscroll button { display: flex; align-items: center; justify-content: center; width: 18px; margin: -1px; background: #e8e8e8; }

.waves { flex: 1; min-width: 0; display: flex; flex-direction: column; background: #000; color: #fff; }
.plot { position: relative; flex: 1; padding: 44px 1px 0 1px; }
.ruler { position: relative; display: flex; border-bottom: 1px solid #fff; height: 17px; }
.ruler span {
  flex: 1; border-left: 1px solid #fff; padding-left: 1px; line-height: 13px; font-size: 11px;
  background: linear-gradient(90deg, #fff 1px, transparent 1px) 15px bottom / 20% 2px repeat-x;
}
.ruler span:first-child { border-color: red; }
.vline { position: absolute; left: 1px; top: 22px; bottom: 0; width: 1px; background: red; }
.vline.end { left: auto; right: 1px; top: 37px; }
.mark { position: absolute; height: 14px; padding: 0 3px; line-height: 12px; background: red; border: 1px solid; border-color: #f88 #a00 #a00 #f88; white-space: nowrap; }
.mark.base { left: 1px; top: 15px; }
.mark.cur { right: 1px; top: 30px; }
.trace { position: relative; display: grid; grid-template-columns: repeat(9, minmax(0, 1fr)); height: 20px; padding: 2px 0 1px; }
.trace b {
  border: 2px solid #0f0; border-radius: 3px / 6px; padding-left: 4px;
  font: 10px/12px "DejaVu Sans Mono", monospace;
}
.trace b.x { border-color: red; border-radius: 0; padding-left: 0; }
.t2 { grid-column: span 2; } .t3 { grid-column: span 3; } .t4 { grid-column: span 4; } .t7 { grid-column: span 7; }
.trace.lit { background: #333; }
.long { padding: 1px 1px 2px; }
.long .thumb { border-left: 1px solid red; border-right: 2px solid red; }
.long::after { content: ""; position: absolute; left: 24px; right: 24px; bottom: 1px; height: 1px; background: repeating-linear-gradient(90deg, #000 0 14px, #e8e8e8 14px 15px); }
.peg { position: absolute; left: 14px; bottom: -1px; }
.peg.last { left: auto; right: 14px; }

.vscroll { display: flex; flex-direction: column; width: 13px; margin: 61px 0 18px 1px; padding: 1px; background: #b4b4b4; border-left: 1px solid #888; border-top: 1px solid #888; }
.vscroll .arr { width: 11px; height: 12px; }
.vscroll .thumb { margin: 1px 0; }

.status { display: flex; min-height: 29px; border-top: 1px solid #888; border-bottom: 1px solid #888; padding: 3px 2px 2px 0; box-shadow: inset 0 1px #fff; }
.status > * { border: 1px solid; border-color: #888 #fff #fff #888; }
.status > :first-child { border-left: 0; }
.status button { display: flex; align-items: center; justify-content: center; width: 22px; }
.status .msg { flex: 1; margin-right: 1px; }
.status .count { width: 92px; padding: 3px 3px 0 2px; white-space: nowrap; }
```
